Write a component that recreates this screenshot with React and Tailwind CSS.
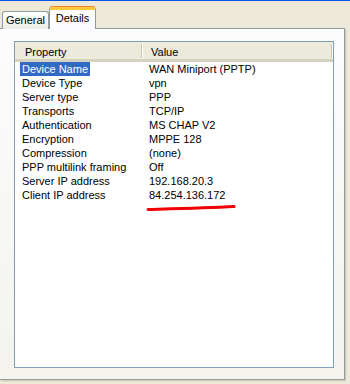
import React from "react";

const rows = [
  ["Device Name", "WAN Miniport (PPTP)"],
  ["Device Type", "vpn"],
  ["Server type", "PPP"],
  ["Transports", "TCP/IP"],
  ["Authentication", "MS CHAP V2"],
  ["Encryption", "MPPE 128"],
  ["Compression", "(none)"],
  ["PPP multilink framing", "Off"],
  ["Server IP address", "192.168.20.3"],
  ["Client IP address", "84.254.136.172"],
];

const HeaderSep = () => (
  <div className="flex h-[14px] self-center">
    <div className="w-px bg-[#C7C5B2]" />
    <div className="w-px bg-white" />
  </div>
);

const App = () => {
  return (
    <div
      className="relative h-[384px] w-[350px] overflow-hidden bg-[#ECE9D8] text-[11px] text-black"
      style={{ fontFamily: '"Liberation Sans", Arial, sans-serif' }}
    >
      <div className="h-px bg-[#0054E3]" />

      {/* Tabs */}
      <div className="relative z-10 -mb-px flex h-[28px] items-end pl-[2px]">
        <div className="flex h-[18px] w-[47px] items-center justify-center rounded-t-[3px] border border-b-0 border-[#919B9C] bg-gradient-to-b from-white to-[#ECEBE6] pb-[1px]">
          General
        </div>
        <div className="flex h-[22px] w-[47px] flex-col rounded-t-[3px] border-x border-[#919B9C] bg-[#FCFCFE]">
          <div className="h-[3px] rounded-t-[2px] bg-[#FFC83C] shadow-[0_-1px_0_#E68B2C]" />
          <div className="flex flex-1 items-center justify-center pb-[3px]">
            Details
          </div>
        </div>
      </div>

      {/* Tab panel */}
      <div className="h-[352px] w-[345px] border-y border-r border-[#919B9C] bg-gradient-to-b from-[#FCFCFE] to-[#F4F3EE] pl-[14px] pt-[12px] shadow-[1px_1px_0_#D0CEBF,2px_2px_0_#E3E0D0]">
        <div className="relative h-[327px] w-[320px] border border-[#7F9DB9] bg-white">
          {/* header */}
          <div className="flex h-[20px] border-b-[3px] border-[#D6D2C2] bg-[#EBEADB]">
            <div className="flex w-[126px] items-center pl-[10px] pt-[3px]">Property</div>
            <HeaderSep />
            <div className="flex w-[188px] items-center pl-[8px] pt-[3px]">Value</div>
            <HeaderSep />
          </div>

          {/* rows */}
          <div className="flex flex-col">
            {rows.map(([k, v], i) => (
              <div key={k} className="flex h-[14px] items-center leading-[14px]">
                <div className="w-[127px] pl-[5px]">
                  <span
                    className={
                      i === 0
                        ? "bg-[#316AC5] px-[2px] py-[1px] text-white"
                        : "px-[2px]"
                    }
                  >
                    {k}
                  </span>
                </div>
                <div className="pl-[7px]">{v}</div>
              </div>
            ))}
          </div>

          {/* red underline */}
          <svg
            className="absolute left-[131px] top-[161px]"
            width="92"
            height="10"
            viewBox="0 0 92 10"
          >
            <path
              d="M2 6.5 C 30 5.8, 60 5.2, 88 3.6"
              stroke="#F00000"
              strokeWidth="3"
              strokeLinecap="round"
              fill="none"
            />
          </svg>
        </div>
      </div>
    </div>
  );
};

export default App;
